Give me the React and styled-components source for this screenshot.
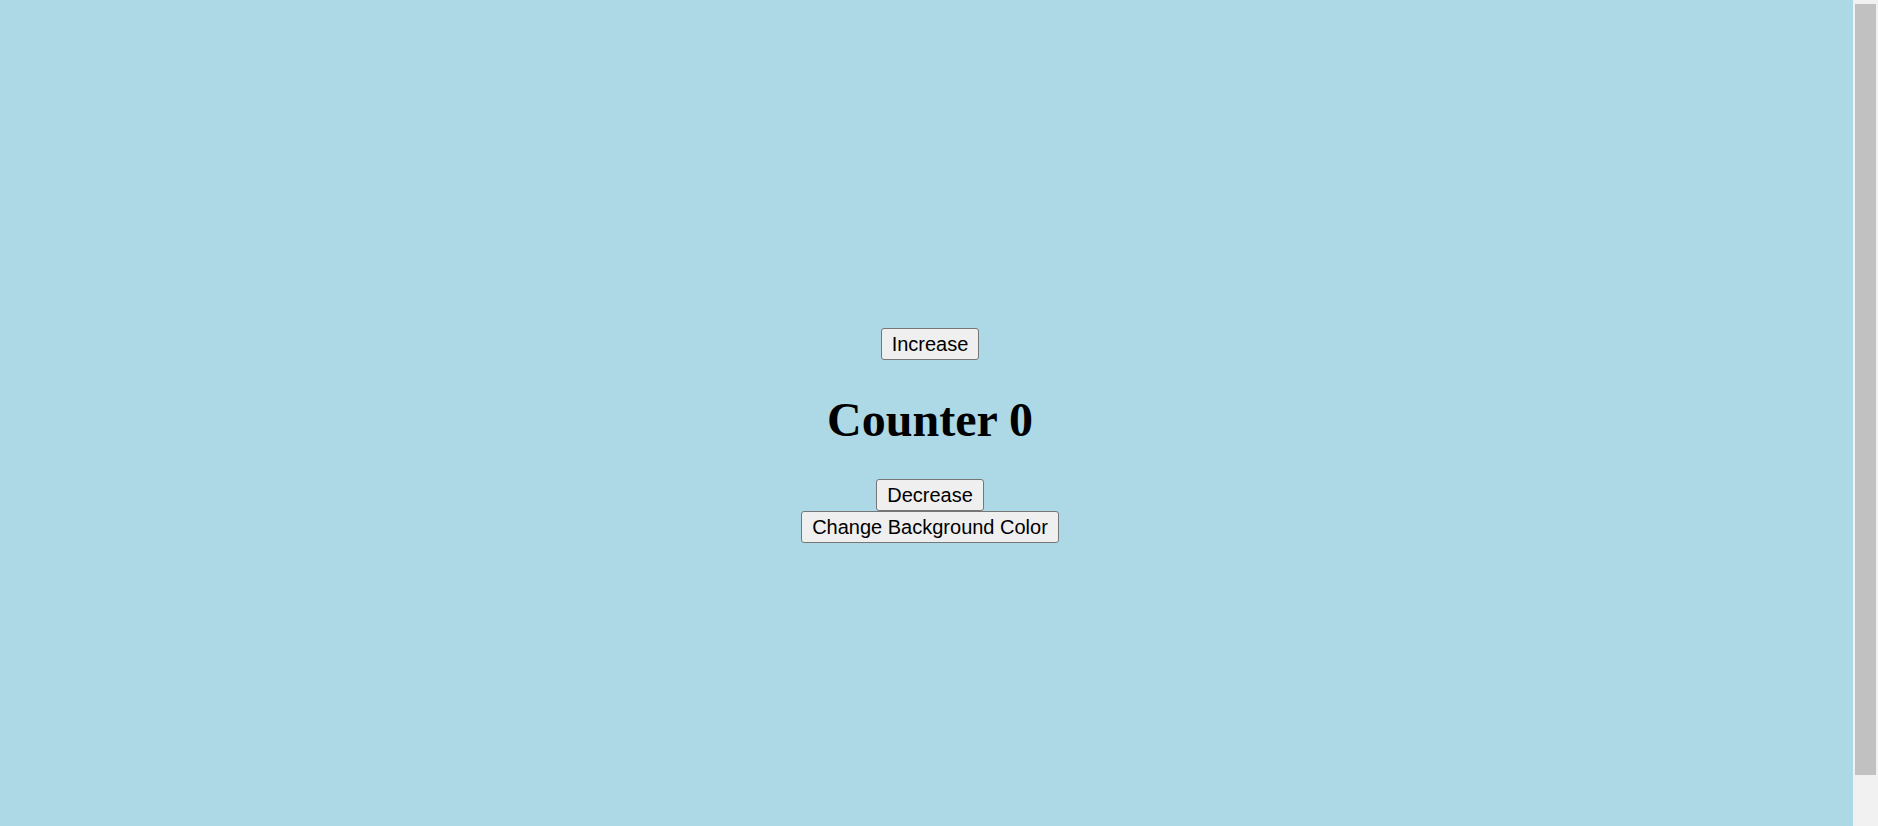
import React, { useState } from "react";
import styled, { createGlobalStyle } from "styled-components";

const GlobalStyle = createGlobalStyle`
  html, body {
    margin: 0;
    padding: 0;
  }
  body {
    background-color: ${(p) => p.bg};
    font-family: "Liberation Serif", "Times New Roman", serif;
  }
`;

const colors = ["#add8e6", "#f0e68c", "#ffb6c1", "#98fb98"];

export default function App() {
  const [count, setCount] = useState(0);
  const [colorIndex, setColorIndex] = useState(0);

  const changeColor = () => {
    setColorIndex((colorIndex + 1) % colors.length);
  };

  return (
    <>
      <GlobalStyle bg={colors[colorIndex]} />
      <Wrapper>
        <Button onClick={() => setCount(count + 1)}>Increase</Button>
        <Title>Counter {count}</Title>
        <Button onClick={() => setCount(count - 1)}>Decrease</Button>
        <Button onClick={changeColor}>Change Background Color</Button>
      </Wrapper>
      <ScrollTrack>
        <ScrollThumb />
      </ScrollTrack>
    </>
  );
}

const Wrapper = styled.div`
  min-height: 885px;
  box-sizing: border-box;
  margin-right: 25px;
  padding-bottom: 14px;
  padding-left: 7px;
  display: flex;
  flex-direction: column;
  align-items: center;
  justify-content: center;
`;

const Title = styled.h1`
  margin: 32px 0;
  font-family: "Liberation Serif", "Times New Roman", serif;
  font-size: 48px;
  font-weight: bold;
  line-height: 55px;
  color: #000;
`;

const Button = styled.button`
  font-family: "Liberation Sans", Arial, sans-serif;
  font-size: 20px;
  line-height: 23px;
  padding: 3.5px 10px;
  border: 1px solid #767676;
  border-radius: 3px;
  background-color: #efefef;
  color: #000;
  cursor: pointer;
  &:hover {
    background-color: #e5e5e5;
  }
`;

const ScrollTrack = styled.div`
  position: fixed;
  top: 0;
  right: 0;
  width: 25px;
  height: 100vh;
  box-sizing: border-box;
  padding: 4px 2px 0 2px;
  background-color: #f1f1f1;
`;

const ScrollThumb = styled.div`
  height: 771px;
  background-color: #c1c1c1;
`;
